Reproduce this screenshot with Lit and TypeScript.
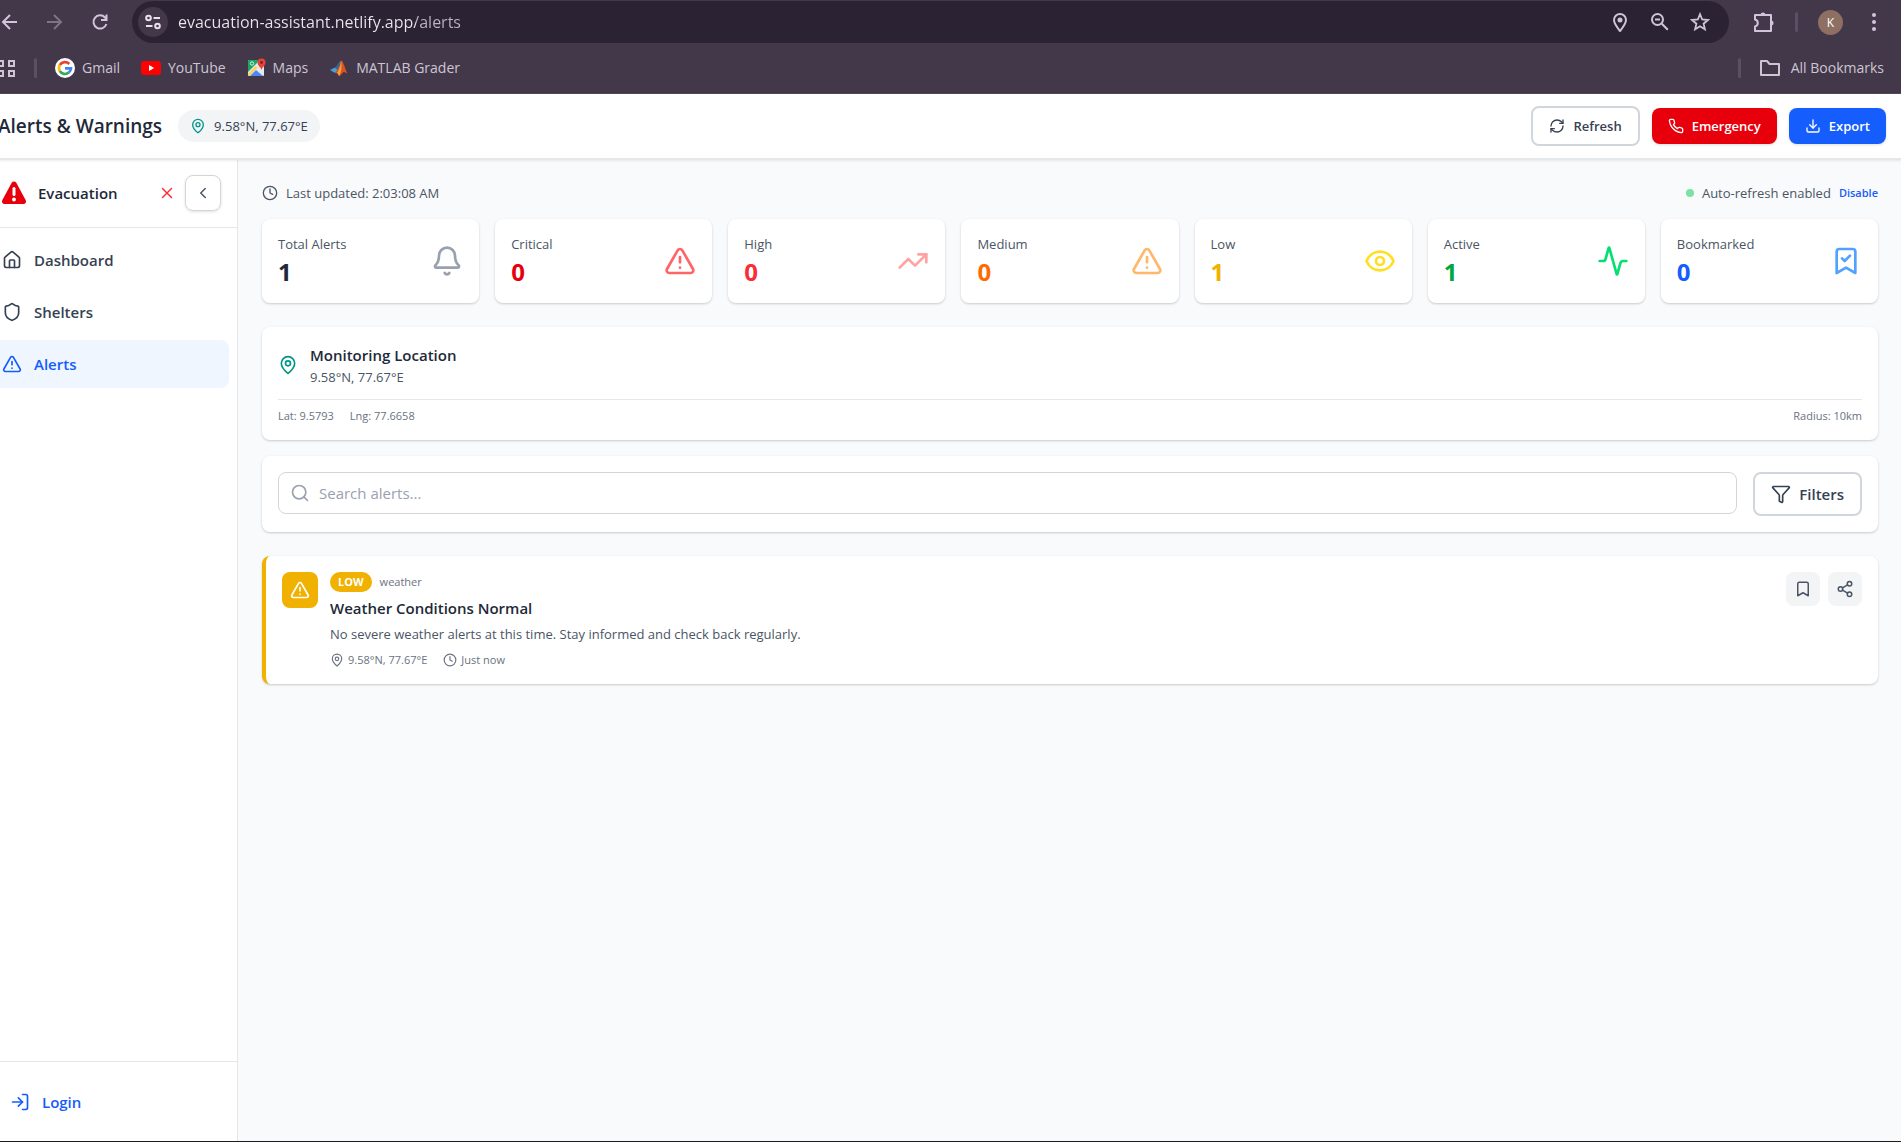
import { LitElement, html, svg, css } from "lit";
import { customElement, property, state } from "lit/decorators.js";
import { classMap } from "lit/directives/class-map.js";

/* Stroke icons on a 24 x 24 grid. */
const ICONS: Record<string, unknown> = {
  pin: svg`<path d="M20 10c0 4.993-5.539 10.193-7.399 11.799a1 1 0 0 1-1.202 0C9.539 20.193 4 14.993 4 10a8 8 0 0 1 16 0"/><circle cx="12" cy="10" r="3"/>`,
  refresh: svg`<path d="M3 12a9 9 0 0 1 9-9 9.75 9.75 0 0 1 6.74 2.74L21 8"/><path d="M21 3v5h-5"/><path d="M21 12a9 9 0 0 1-9 9 9.75 9.75 0 0 1-6.74-2.74L3 16"/><path d="M8 16H3v5"/>`,
  phone: svg`<path d="M22 16.92v3a2 2 0 0 1-2.18 2 19.79 19.79 0 0 1-8.63-3.07 19.5 19.5 0 0 1-6-6 19.79 19.79 0 0 1-3.07-8.67A2 2 0 0 1 4.11 2h3a2 2 0 0 1 2 1.72 12.84 12.84 0 0 0 .7 2.81 2 2 0 0 1-.45 2.11L8.09 9.91a16 16 0 0 0 6 6l1.27-1.27a2 2 0 0 1 2.11-.45 12.84 12.84 0 0 0 2.81.7A2 2 0 0 1 22 16.92z"/>`,
  download: svg`<path d="M12 15V3"/><path d="M21 15v4a2 2 0 0 1-2 2H5a2 2 0 0 1-2-2v-4"/><path d="m7 10 5 5 5-5"/>`,
  x: svg`<path d="M18 6 6 18"/><path d="m6 6 12 12"/>`,
  left: svg`<path d="m15 18-6-6 6-6"/>`,
  home: svg`<path d="M15 21v-8a1 1 0 0 0-1-1h-4a1 1 0 0 0-1 1v8"/><path d="M3 10a2 2 0 0 1 .709-1.528l7-5.999a2 2 0 0 1 2.582 0l7 5.999A2 2 0 0 1 21 10v9a2 2 0 0 1-2 2H5a2 2 0 0 1-2-2z"/>`,
  shield: svg`<path d="M20 13c0 5-3.5 7.5-7.66 8.95a1 1 0 0 1-.67-.01C7.5 20.5 4 18 4 13V6a1 1 0 0 1 1-1c2 0 4.5-1.2 6.24-2.72a1.17 1.17 0 0 1 1.52 0C14.51 3.81 17 5 19 5a1 1 0 0 1 1 1z"/>`,
  alert: svg`<path d="m21.73 18-8-14a2 2 0 0 0-3.48 0l-8 14A2 2 0 0 0 4 21h16a2 2 0 0 0 1.73-3"/><path d="M12 9v4"/><path d="M12 17h.01"/>`,
  login: svg`<path d="m10 17 5-5-5-5"/><path d="M15 12H3"/><path d="M15 3h4a2 2 0 0 1 2 2v14a2 2 0 0 1-2 2h-4"/>`,
  clock: svg`<circle cx="12" cy="12" r="10"/><path d="M12 6v6l4 2"/>`,
  bell: svg`<path d="M10.268 21a2 2 0 0 0 3.464 0"/><path d="M3.262 15.326A1 1 0 0 0 4 17h16a1 1 0 0 0 .74-1.673C19.41 13.956 18 12.499 18 8A6 6 0 0 0 6 8c0 4.499-1.411 5.956-2.738 7.326"/>`,
  trend: svg`<path d="M16 7h6v6"/><path d="m22 7-8.5 8.5-5-5L2 17"/>`,
  eye: svg`<path d="M2.062 12.348a1 1 0 0 1 0-.696 10.75 10.75 0 0 1 19.876 0 1 1 0 0 1 0 .696 10.75 10.75 0 0 1-19.876 0"/><circle cx="12" cy="12" r="3"/>`,
  activity: svg`<path d="M22 12h-2.48a2 2 0 0 0-1.93 1.46l-2.35 8.36a.25.25 0 0 1-.48 0L9.24 2.18a.25.25 0 0 0-.48 0l-2.35 8.36A2 2 0 0 1 4.49 12H2"/>`,
  bookmarkCheck: svg`<path d="m19 21-7-4-7 4V5a2 2 0 0 1 2-2h10a2 2 0 0 1 2 2Z"/><path d="m9 10 2 2 4-4"/>`,
  bookmark: svg`<path d="m19 21-7-4-7 4V5a2 2 0 0 1 2-2h10a2 2 0 0 1 2 2v16z"/>`,
  share: svg`<circle cx="18" cy="5" r="3"/><circle cx="6" cy="12" r="3"/><circle cx="18" cy="19" r="3"/><path d="m8.59 13.51 6.83 3.98"/><path d="m15.41 6.51-6.82 3.98"/>`,
  search: svg`<path d="m21 21-4.34-4.34"/><circle cx="11" cy="11" r="8"/>`,
  filter: svg`<path d="M10 20a1 1 0 0 0 .553.895l2 1A1 1 0 0 0 14 21v-7a2 2 0 0 1 .517-1.341L21.74 4.67A1 1 0 0 0 21 3H3a1 1 0 0 0-.742 1.67l7.225 7.989A2 2 0 0 1 10 14z"/>`,
};

function icon(name: string, size: number, cls = "") {
  return html`<svg class="ico ${cls}" width=${size} height=${size} viewBox="0 0 24 24" fill="none"
    stroke="currentColor" stroke-width="2" stroke-linecap="round" stroke-linejoin="round" aria-hidden="true">${ICONS[name]}</svg>`;
}

const shared = css`
  :host { display: block; box-sizing: border-box; font-family: "Segoe UI", "Open Sans", "Noto Sans", sans-serif; }
  *, *::before, *::after { box-sizing: border-box; }
  button, input { font-family: inherit; margin: 0; }
  button { cursor: pointer; border: 0; padding: 0; background: none; color: inherit; }
  a { text-decoration: none; color: inherit; }
  h1, h2, h3, p, ul { margin: 0; padding: 0; }
  svg { display: block; flex: none; }
`;

@customElement("browser-bar")
class BrowserBar extends LitElement {
  static styles = [shared, css`
    :host { background: #42384a; color: #cdc6d2; overflow: hidden; border-bottom: 1px solid #524958; }
    .row { display: flex; align-items: center; }
    .tools { height: 43px; padding: 1px 17px 0 0; }
    .nav { display: flex; align-items: center; gap: 25px; width: 132px; flex: none; color: #d3c3dc; }
    .nav button:nth-child(2) { color: #7d7484; }
    .address { flex: 1; display: flex; align-items: center; height: 42px; border-radius: 21px; background: #2b2233; padding: 0 19px 0 6px; }
    .site { display: flex; align-items: center; justify-content: center; width: 30px; height: 30px; border-radius: 50%; background: #42384a; color: #e8e2ec; }
    .url { flex: 1; min-width: 0; border: 0; outline: 0; padding: 0; margin-left: 10px; font-size: 16px; line-height: 24px; color: #ebe6ee;
      background: linear-gradient(90deg, #ebe6ee 238px, #bdb6c3 238px); background-clip: text; -webkit-background-clip: text; -webkit-text-fill-color: transparent; }
    .actions { display: flex; gap: 20px; }
    .right { display: flex; align-items: center; padding-left: 24px; color: #d3c3dc; }
    .sep { width: 3px; height: 20px; border-radius: 2px; background: #5a5063; flex: none; }
    .right .sep { margin: 0 20px; }
    .avatar { width: 25px; height: 25px; border-radius: 50%; background: #8e7063; color: #fff; font-size: 12px; line-height: 25px; margin-right: 21px; }
    .marks { height: 50px; padding-right: 17px; font-size: 14px; line-height: 20px; }
    .apps { margin-left: -4px; margin-right: 18px; }
    .marks .sep { margin-right: 18px; }
    .mark { display: flex; align-items: center; gap: 7px; margin-right: 21px; }
    .spacer { flex: 1; }
    .all { display: flex; align-items: center; gap: 10px; font-size: inherit; line-height: inherit; }
  `];

  render() {
    return html`
      <div class="row tools">
        <div class="nav">
          <button aria-label="Back"><svg width="20" height="20" viewBox="0 0 20 20" fill="none" stroke="currentColor" stroke-width="2"><path d="M17 10H3M10 3l-7 7 7 7"/></svg></button>
          <button aria-label="Forward"><svg width="20" height="20" viewBox="0 0 20 20" fill="none" stroke="currentColor" stroke-width="2"><path d="M2 10h14M9 3l7 7-7 7"/></svg></button>
          <button aria-label="Reload"><svg width="20" height="20" viewBox="0 0 20 20" fill="none" stroke="currentColor" stroke-width="2"><path d="M16.4 12A6.600 6.600 0 1 1 15 5.500L16.500 7M16.500 2.500v5.500H11"/></svg></button>
        </div>
        <div class="address">
          <button class="site" aria-label="Site information"><svg width="18" height="18" viewBox="0 0 18 18" fill="none" stroke="currentColor" stroke-width="2"><circle cx="4.500" cy="5" r="2.300"/><path d="M9.500 5H16M2 13h6.500"/><circle cx="13.500" cy="13" r="2.300"/></svg></button>
          <input class="url" type="text" aria-label="Address" .value=${"evacuation-assistant.netlify.app/alerts"} />
          <div class="actions">
            <button aria-label="Location"><svg width="20" height="20" viewBox="0 0 20 20" fill="none" stroke="currentColor" stroke-width="2"><path d="M10 19c-3.500-4.500-6-7.500-6-11a6 6 0 0 1 12 0c0 3.500-2.500 6.500-6 11z"/><circle cx="10" cy="8" r="2.500" fill="currentColor" stroke="none"/></svg></button>
            <button aria-label="Zoom"><svg width="20" height="20" viewBox="0 0 20 20" fill="none" stroke="currentColor" stroke-width="2"><circle cx="7.500" cy="7.500" r="5.500"/><path d="M11.800 11.800l6 6M5 7.500h5"/></svg></button>
            <button aria-label="Bookmark this page"><svg width="20" height="20" viewBox="0 0 20 20" fill="none" stroke="currentColor" stroke-width="1.800"><path d="M10 2.200l2.200 5.300 5.700.5-4.300 3.700 1.300 5.600L10 14.300l-4.900 3 1.300-5.600L2.100 8l5.700-.5z"/></svg></button>
          </div>
        </div>
        <div class="right">
          <button aria-label="Extensions"><svg width="22" height="22" viewBox="0 0 22 22" fill="none" stroke="currentColor" stroke-width="2" stroke-linejoin="round"><path d="M2 4h16v16H2v-4.500a3.600 3.600 0 0 0 0-7z"/><path d="M7.500 4a2.500 2.500 0 0 1 5 0zM18 9.500a2.500 2.500 0 0 1 0 5z" fill="currentColor" stroke="none"/></svg></button>
          <span class="sep"></span>
          <button class="avatar" aria-label="Profile K">K</button>
          <button aria-label="Menu"><svg width="20" height="20" viewBox="0 0 20 20" fill="currentColor"><circle cx="10" cy="3" r="2"/><circle cx="10" cy="10" r="2"/><circle cx="10" cy="17" r="2"/></svg></button>
        </div>
      </div>
      <div class="row marks">
        <button class="apps" aria-label="Apps"><svg width="20" height="20" viewBox="0 0 20 20" fill="none" stroke="currentColor" stroke-width="2"><path d="M2 3h5v5H2zM13 3h5v5h-5zM2 13h5v5H2zM13 13h5v5h-5z"/></svg></button>
        <span class="sep"></span>
        <a class="mark" href="#gmail">
          <svg width="20" height="20" viewBox="0 0 20 20"><circle cx="10" cy="10" r="10" fill="#fff"/><g fill="none" stroke-width="2.600"><path d="M14.300 6A6 6 0 0 0 4.800 7" stroke="#ea4335"/><path d="M4.800 7a6 6 0 0 0 0 6" stroke="#fbbc05"/><path d="M4.800 13a6 6 0 0 0 9 1.600" stroke="#34a853"/><path d="M13.800 14.600a6 6 0 0 0 2.200-4.200H10" stroke="#4285f4"/></g></svg>
          Gmail</a>
        <a class="mark" href="#youtube">
          <svg width="20" height="20" viewBox="0 0 20 20"><rect y="3" width="20" height="14" rx="3.500" fill="#f00"/><path d="M8 7l5.200 3L8 13z" fill="#fff"/></svg>
          YouTube</a>
        <a class="mark" href="#maps">
          <svg width="19" height="20" viewBox="0 0 19 20"><rect x="1" y="2" width="16" height="16" rx="1" fill="#e8eaed"/><path d="M1 3a1 1 0 0 1 1-1h11L1 14z" fill="#1fa463"/><path d="M9 12l7 6H3z" fill="#4a89f3"/><path d="M1.500 17l8-8" stroke="#fbd35a" stroke-width="2.500"/><circle cx="5" cy="5.500" r="1.700" fill="none" stroke="#d5f2e2"/><path d="M14.500 12c-.5-3-4-4-4-7.500a4 4 0 0 1 8 0c0 3.500-3.500 4.500-4 7.500z" fill="#e3453a"/><circle cx="14.500" cy="4.500" r="1.400" fill="#8e1d14"/></svg>
          Maps</a>
        <a class="mark" href="#matlab">
          <svg width="20" height="20" viewBox="0 0 20 20"><path d="M1 12l5-2.500 3 2.500-3 3z" fill="#4c9fd6"/><path d="M6 9.500C8.500 8 9.500 3.500 12 2.500L9 12z" fill="#2c6d9c"/><path d="M12 2.500c-1 4-2 8-6 12.500 2-.5 3 1 4 3.500 3-2 4-5 5-4.500 1.500.3 2 1 3.500 1.500C16 11 14.500 3 12 2.500z" fill="#d9541e"/><path d="M12 2.500c-.6 5-1.500 9-4 12.500 1 0 1.500 1.500 2 3 2.500-3 3-10 2-15.500z" fill="#f2a03d"/></svg>
          MATLAB Grader</a>
        <span class="spacer"></span>
        <span class="sep"></span>
        <button class="all">
          <svg width="22" height="20" viewBox="0 0 22 20" fill="none" stroke="currentColor" stroke-width="2" stroke-linejoin="round"><path d="M2 17V3h6l2.500 3H20v11z"/></svg>
          <span>All Bookmarks</span>
        </button>
      </div>`;
  }
}

interface Stat { label: string; value: number; icon: string; tone: string; }

@customElement("stat-card")
class StatCard extends LitElement {
  @property({ attribute: false }) stat!: Stat;

  static styles = [shared, css`
    :host { min-width: 0; }
    .card { display: flex; align-items: center; justify-content: space-between; height: 84px; padding: 0 16px; border-radius: 8px; background: #fff; box-shadow: 0 1px 3px rgb(0 0 0 / 0.1), 0 1px 2px rgb(0 0 0 / 0.1); }
    .label { font-size: 13px; line-height: 20px; color: #4a5565; }
    .value { font-size: 24px; line-height: 32px; font-weight: 700; margin-top: 2px; }
    .total .value { color: #1e2939; } .total .ico { color: #99a1af; }
    .critical .value { color: #e7000b; } .critical .ico { color: #ff6467; }
    .high .value { color: #fb2c36; } .high .ico { color: #ffa2a2; }
    .medium .value { color: #ff6900; } .medium .ico { color: #ffb86a; }
    .low .value { color: #f0b100; } .low .ico { color: #ffdf20; }
    .active .value { color: #00a63e; } .active .ico { color: #05df72; }
    .saved .value { color: #155dfc; } .saved .ico { color: #51a2ff; }
  `];

  render() {
    const s = this.stat;
    return html`<div class="card ${s.tone}">
      <div><p class="label">${s.label}</p><p class="value">${s.value}</p></div>
      ${icon(s.icon, 32)}
    </div>`;
  }
}

@customElement("app-root")
class AppRoot extends LitElement {
  @state() private current = "Alerts";

  private stats: Stat[] = [
    { label: "Total Alerts", value: 1, icon: "bell", tone: "total" },
    { label: "Critical", value: 0, icon: "alert", tone: "critical" },
    { label: "High", value: 0, icon: "trend", tone: "high" },
    { label: "Medium", value: 0, icon: "alert", tone: "medium" },
    { label: "Low", value: 1, icon: "eye", tone: "low" },
    { label: "Active", value: 1, icon: "activity", tone: "active" },
    { label: "Bookmarked", value: 0, icon: "bookmarkCheck", tone: "saved" },
  ];

  private links = [
    { label: "Dashboard", icon: "home" },
    { label: "Shelters", icon: "shield" },
    { label: "Alerts", icon: "alert" },
  ];

  static styles = [shared, css`
    :host { display: flex; flex-direction: column; min-height: 100vh; overflow: hidden; background: #f9fafb; color: #1e2939; border-bottom: 1px solid #1b1b1f; }
    .page { flex: 1; display: flex; flex-direction: column; margin-left: -18px; }
    .top { display: flex; align-items: center; justify-content: space-between; height: 66px; padding: 0 15px 0 16px; background: #fff; border-bottom: 2px solid #e5e7eb; box-shadow: 0 1px 2px rgb(0 0 0 / 0.08); z-index: 1; }
    .group { display: flex; align-items: center; }
    .top .group:first-child { gap: 16px; }
    .top .group:last-child { gap: 12px; }
    h1 { font-size: 19px; line-height: 28px; font-weight: 600; }
    .chip { display: flex; align-items: center; gap: 8px; height: 32px; padding: 0 12px; border-radius: 16px; background: #f3f4f6; color: #364153; font-size: 13px; line-height: 20px; }
    .teal { color: #009689; }
    .btn { display: flex; align-items: center; gap: 8px; height: 36px; padding: 0 16px; border-radius: 8px; font-size: 13px; line-height: 20px; font-weight: 600; color: #fff; box-shadow: 0 1px 3px rgb(0 0 0 / 0.12); }
    .btn.outline { height: 40px; border: 2px solid #d1d5dc; background: #fff; color: #364153; box-shadow: none; }
    .btn.danger { background: #e7000b; }
    .btn.primary { background: #155dfc; }
    .body { flex: 1; display: flex; }
    .side { display: flex; flex-direction: column; width: 256px; flex: none; background: #fff; border-right: 1px solid #e5e7eb; }
    .brand { display: flex; align-items: center; height: 68px; padding: 0 16px 2px 19px; border-bottom: 1px solid #e5e7eb; }
    .brand h2 { flex: 1; margin-left: 11px; font-size: 15px; line-height: 24px; font-weight: 600; }
    .close { color: #fb2c36; }
    .collapse { display: flex; align-items: center; justify-content: center; width: 36px; height: 36px; margin-left: 9px; border: 1px solid #d1d5dc; border-radius: 8px; color: #4a5565; box-shadow: 0 1px 3px rgb(0 0 0 / 0.12); }
    .links { flex: 1; display: flex; flex-direction: column; gap: 4px; padding: 8px; }
    .link { display: flex; align-items: center; gap: 12px; height: 48px; padding: 0 12px; border-radius: 8px; font-size: 15px; line-height: 24px; font-weight: 600; color: #364153; }
    .link.on { background: #eff6ff; color: #155dfc; }
    .foot { border-top: 1px solid #e5e7eb; padding: 16px 16px 15px; }
    .foot .link { color: #155dfc; }
    main { flex: 1; min-width: 0; display: flex; flex-direction: column; padding: 21px 23px 24px 24px; }
    .status { display: flex; align-items: center; justify-content: space-between; height: 24px; margin-bottom: 14px; font-size: 13px; line-height: 20px; color: #4a5565; }
    .status .group { gap: 8px; }
    .dot { width: 8px; height: 8px; border-radius: 50%; background: #7be3a1; }
    .disable { font-size: 11px; line-height: 16px; font-weight: 600; color: #155dfc; }
    .stats { display: grid; grid-template-columns: repeat(7, minmax(0, 1fr)); gap: 16px; margin-bottom: 24px; }
    .card { background: #fff; border-radius: 8px; padding: 16px; box-shadow: 0 1px 3px rgb(0 0 0 / 0.1), 0 1px 2px rgb(0 0 0 / 0.1); }
    .place { display: flex; align-items: center; gap: 12px; padding-bottom: 12px; border-bottom: 1px solid #e5e7eb; }
    .place h2, .info h3 { font-size: 15px; line-height: 24px; font-weight: 600; }
    .place p { font-size: 13px; line-height: 20px; color: #4a5565; }
    .coords { display: flex; gap: 16px; padding-top: 8px; font-size: 11px; line-height: 16px; color: #6a7282; }
    .coords span:last-child { margin-left: auto; }
    .find { display: flex; align-items: flex-start; gap: 16px; margin: 16px 0 24px; }
    .box { flex: 1; display: flex; align-items: center; gap: 9px; height: 42px; padding: 0 11px; border: 1px solid #d1d5dc; border-radius: 8px; color: #99a1af; }
    .box input { flex: 1; min-width: 0; border: 0; outline: 0; padding: 0; background: none; font-size: 15px; line-height: 24px; color: #1e2939; }
    .box input::placeholder { color: #99a1af; opacity: 1; }
    .btn.filters { height: 44px; font-size: 15px; line-height: 24px; }
    .alert { display: flex; align-items: flex-start; border-left: 4px solid #f0b100; }
    .badge { display: flex; align-items: center; justify-content: center; width: 36px; height: 36px; border-radius: 8px; background: #f0b100; color: #fff; }
    .info { flex: 1; padding-left: 12px; }
    .tags { display: flex; align-items: center; gap: 8px; font-size: 11px; line-height: 16px; color: #6a7282; }
    .level { padding: 2px 8px; border-radius: 10px; background: #f0b100; color: #fff; font-weight: 700; }
    .info h3 { margin-top: 4px; }
    .info p { margin-top: 4px; font-size: 13px; line-height: 20px; color: #4a5565; }
    .meta { display: flex; gap: 16px; margin-top: 8px; font-size: 11px; line-height: 16px; color: #6a7282; }
    .meta .group { gap: 4px; }
    .tools { display: flex; gap: 8px; }
    .tools button { display: flex; align-items: center; justify-content: center; width: 34px; height: 34px; border-radius: 8px; background: #f3f4f6; color: #4a5565; }
  `];

  render() {
    return html`
      <browser-bar></browser-bar>
      <div class="page">
        <header class="top">
          <div class="group">
            <h1>Alerts &amp; Warnings</h1>
            <div class="chip">${icon("pin", 16, "teal")}<span>9.58°N, 77.67°E</span></div>
          </div>
          <div class="group">
            <button class="btn outline">${icon("refresh", 16)}Refresh</button>
            <button class="btn danger">${icon("phone", 16)}Emergency</button>
            <button class="btn primary">${icon("download", 16)}Export</button>
          </div>
        </header>
        <div class="body">
          <aside class="side">
            <div class="brand">
              <svg width="26" height="24" viewBox="0 0 26 24" aria-hidden="true"><path d="M10.700 1.800a2.700 2.700 0 0 1 4.600 0l9.300 17.200a2.600 2.600 0 0 1-2.300 4H3.700a2.600 2.600 0 0 1-2.300-4z" fill="#e7000b"/><path d="M13 7.500v6" stroke="#fff" stroke-width="3" stroke-linecap="round"/><circle cx="13" cy="18.500" r="1.900" fill="#fff"/></svg>
              <h2>Evacuation</h2>
              <button class="close" aria-label="Close">${icon("x", 18)}</button>
              <button class="collapse" aria-label="Collapse sidebar">${icon("left", 18)}</button>
            </div>
            <nav class="links">
              ${this.links.map((l) => html`<a href="#${l.label.toLowerCase()}"
                class=${classMap({ link: true, on: l.label === this.current })}
                @click=${() => (this.current = l.label)}>${icon(l.icon, 20)}${l.label}</a>`)}
            </nav>
            <div class="foot"><a class="link" href="#login">${icon("login", 20)}Login</a></div>
          </aside>
          <main>
            <div class="status">
              <div class="group">${icon("clock", 16)}<span>Last updated: 2:03:08 AM</span></div>
              <div class="group"><span class="dot"></span><span>Auto-refresh enabled</span><button class="disable">Disable</button></div>
            </div>
            <section class="stats">${this.stats.map((s) => html`<stat-card .stat=${s}></stat-card>`)}</section>
            <section class="card">
              <div class="place">${icon("pin", 20, "teal")}<div><h2>Monitoring Location</h2><p>9.58°N, 77.67°E</p></div></div>
              <div class="coords"><span>Lat: 9.5793</span><span>Lng: 77.6658</span><span>Radius: 10km</span></div>
            </section>
            <section class="card find">
              <label class="box">${icon("search", 20)}<input type="text" placeholder="Search alerts..." aria-label="Search alerts" /></label>
              <button class="btn outline filters">${icon("filter", 20)}Filters</button>
            </section>
            <article class="card alert">
              <div class="badge">${icon("alert", 20)}</div>
              <div class="info">
                <div class="tags"><span class="level">LOW</span><span>weather</span></div>
                <h3>Weather Conditions Normal</h3>
                <p>No severe weather alerts at this time. Stay informed and check back regularly.</p>
                <div class="meta">
                  <span class="group">${icon("pin", 14)}9.58°N, 77.67°E</span>
                  <span class="group">${icon("clock", 14)}Just now</span>
                </div>
              </div>
              <div class="tools">
                <button aria-label="Bookmark alert">${icon("bookmark", 18)}</button>
                <button aria-label="Share alert">${icon("share", 18)}</button>
              </div>
            </article>
          </main>
        </div>
      </div>`;
  }
}
